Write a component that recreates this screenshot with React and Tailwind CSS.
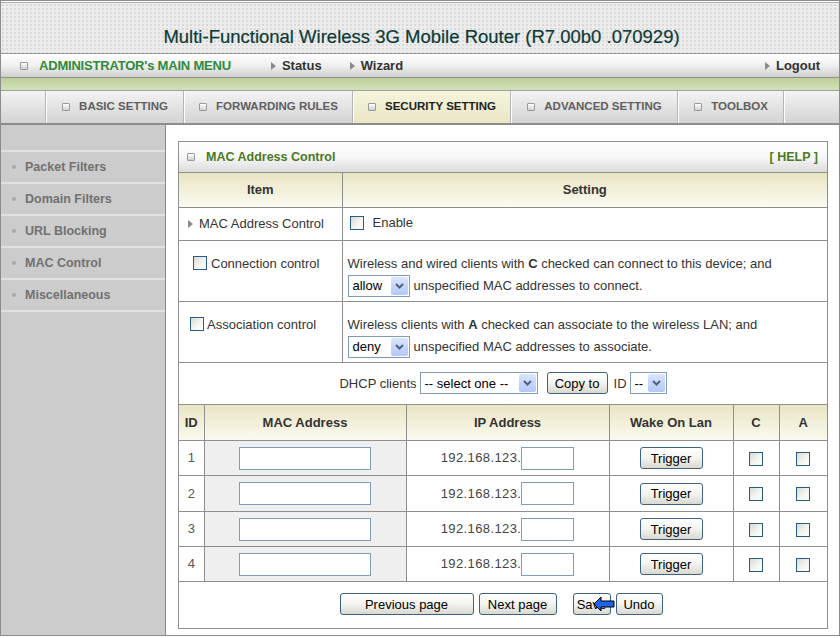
import React from 'react';

const sans = "font-['Liberation_Sans',Arial,sans-serif]";

function Sq() {
    return <span className="inline-block w-[8px] h-[8px] border border-[#9a9a9a] bg-gradient-to-b from-white to-[#cfcfcf] rounded-[1px]" />;
}

function Tri() {
    return (
        <svg width="5" height="8" viewBox="0 0 5 8" className="inline-block mr-[6px]">
            <path d="M0 0L5 4L0 8Z" fill="#8a8a8a" />
        </svg>
    );
}

function Box() {
    return <span className="inline-block w-[14px] h-[14px] border border-[#2a5a86] bg-gradient-to-br from-[#d9d9d2] via-[#f2f2ee] to-white align-middle" />;
}

function Select({ value, w }) {
    return (
        <span className={`inline-flex items-center justify-between h-[22px] border border-[#7f9db9] bg-white align-middle ${w}`}>
            <span className="pl-[4px] text-[13px] text-black leading-none">{value}</span>
            <span className="w-[17px] h-[18px] mr-[1px] rounded-[2px] bg-gradient-to-b from-[#dbe5fd] to-[#b3c8f7] flex items-center justify-center">
                <svg width="9" height="6" viewBox="0 0 9 6">
                    <path d="M1 1L4.5 4.5L8 1" stroke="#4d6185" strokeWidth="2" fill="none" />
                </svg>
            </span>
        </span>
    );
}

function Btn({ children, w }) {
    return (
        <button className={`h-[22px] rounded-[3px] border border-[#3d6282] bg-gradient-to-b from-white via-[#f3f3ef] to-[#d9d9d0] text-[13px] text-black leading-none ${w}`}>
            {children}
        </button>
    );
}

function Input({ w }) {
    return <span className={`inline-block h-[23px] border border-[#7f9db9] bg-white align-middle ${w}`} />;
}

const tabs = [
    { label: 'BASIC SETTING', w: 'w-[138px]' },
    { label: 'FORWARDING RULES', w: 'w-[169px]' },
    { label: 'SECURITY SETTING', w: 'w-[158px]', active: true },
    { label: 'ADVANCED SETTING', w: 'w-[167px]' },
    { label: 'TOOLBOX', w: 'w-[106px]' },
];

const sideItems = ['Packet Filters', 'Domain Filters', 'URL Blocking', 'MAC Control', 'Miscellaneous'];

const rows = [
    { id: 1, h: 'h-[35px]' },
    { id: 2, h: 'h-[36px]' },
    { id: 3, h: 'h-[35px]' },
    { id: 4, h: 'h-[35px]' },
];

export default function App() {
    return (
        <div className={`w-[840px] h-[638px] bg-white ${sans}`}>
            <div className="w-[840px] h-[636px] border border-[#8c8c8c] flex flex-col overflow-hidden">
                {/* Title */}
                <div className="h-[51px] border-t border-[#b0b0b0] mt-[1px] bg-[#ececec] bg-[radial-gradient(#d9d9d9_1px,transparent_1px)] bg-[length:4px_4px] flex items-end justify-center pb-[5px]">
                    <h1 className="text-[18.5px] text-[#0c3a35] leading-[22px] ml-[3px] [-webkit-text-stroke:0.2px_#0c3a35]">Multi-Functional Wireless 3G Mobile Router (R7.00b0 .070929)</h1>
                </div>

                {/* Main menu bar */}
                <div className="h-[25px] border-t border-[#9a9a9a] border-b border-b-[#8e8e8e] bg-gradient-to-b from-white via-[#f0f0f0] to-[#cfcfcf] flex items-center text-[13px] font-bold">
                    <span className="ml-[19px] mr-[11px] flex"><Sq /></span>
                    <span className="text-[#2f8a3c] tracking-[-0.2px]">ADMINISTRATOR's MAIN MENU</span>
                    <span className="ml-[40px] text-[#333] flex items-center"><Tri />Status</span>
                    <span className="ml-[28px] text-[#333] flex items-center"><Tri />Wizard</span>
                    <span className="ml-auto mr-[19px] text-[#333] flex items-center"><Tri />Logout</span>
                </div>

                {/* Green band */}
                <div className="h-[13px] bg-gradient-to-b from-[#bdd09a] to-[#d2e0b7] border-b border-[#a0a0a0]" />

                {/* Tabs */}
                <div className="h-[34px] flex bg-gradient-to-b from-[#f3f3f3] to-[#d3d3d3] border-b-2 border-[#8c8c8c]">
                    <div className="w-[45px] border-r border-[#b5b5b5]" />
                    {tabs.map((t) => (
                        <div
                            key={t.label}
                            className={`${t.w} flex items-center justify-center gap-[9px] border-l border-l-white border-r border-[#b5b5b5] text-[11.5px] font-bold ${t.active ? 'bg-gradient-to-b from-[#f6f4dc] to-[#e9e6c6] text-[#222]' : 'text-[#5f5f5f]'}`}
                        >
                            <Sq />
                            <span>{t.label}</span>
                        </div>
                    ))}
                    <div className="flex-1 border-l border-l-white" />
                </div>

                {/* Body */}
                <div className="flex-1 flex min-h-0">
                    <div className="w-[165px] shrink-0 bg-[#cccccc] border-r border-[#8a8a8a] flex flex-col">
                        <div className="h-[25px]" />
                        {sideItems.map((s) => (
                            <div key={s} className="h-[32px] border-t-2 border-[#e2e2e2] flex items-center pl-[11px] text-[12.5px] font-bold text-[#717171]">
                                <span className="w-[4px] h-[4px] rounded-full bg-[#a8a8a8] mr-[9px]" />
                                {s}
                            </div>
                        ))}
                        <div className="border-t-2 border-[#e2e2e2]" />
                    </div>

                    <div className="flex-1 bg-white pl-[12px] pr-[11px] pt-[16px]">
                        <div className="border border-[#8f8f8f] text-[13px] text-[#333]">
                            {/* Panel header */}
                            <div className="h-[31px] flex items-center pl-[8px] pr-[6px] bg-gradient-to-b from-white via-[#f7f7f7] to-[#dcdcdc] border-b border-[#8f8f8f]">
                                <Sq />
                                <span className="ml-[11px] text-[12.5px] font-bold text-[#4b7a1f]">MAC Address Control</span>
                                <span className="ml-auto mr-[3px] text-[12.5px] font-bold text-[#4b7a1f]">[ HELP ]</span>
                            </div>

                            <table className="w-full border-collapse">
                                <tbody>
                                    <tr className="h-[34px] bg-gradient-to-b from-[#e8e5c2] to-[#fbfaf1]">
                                        <td className="w-[163px] text-center font-bold text-[13px] text-[#333]">Item</td>
                                        <td className="border-l border-[#8f8f8f] text-center font-bold text-[13px] text-[#333]">Setting</td>
                                    </tr>
                                    <tr className="h-[33px]">
                                        <td className="border-t border-[#8f8f8f] pl-[9px] text-[#333]">
                                            <span className="inline-flex items-center"><Tri />MAC Address Control</span>
                                        </td>
                                        <td className="border-t border-l border-[#8f8f8f] pl-[7px]">
                                            <span className="inline-flex items-center gap-[9px] mt-[1px]"><Box />Enable</span>
                                        </td>
                                    </tr>
                                    <tr className="h-[61px]">
                                        <td className="border-t border-[#8f8f8f] align-top pt-[13px] pl-[14px]">
                                            <span className="inline-flex items-center gap-[4px]"><Box />Connection control</span>
                                        </td>
                                        <td className="border-t border-l border-[#8f8f8f] pl-[5px] leading-[22px] align-top pt-[12px]">
                                            <div>Wireless and wired clients with <b>C</b> checked can connect to this device; and</div>
                                            <div className="flex items-center gap-[4px]"><Select value="allow" w="w-[62px]" />unspecified MAC addresses to connect.</div>
                                        </td>
                                    </tr>
                                    <tr className="h-[61px]">
                                        <td className="border-t border-[#8f8f8f] align-top pt-[13px] pl-[11px]">
                                            <span className="inline-flex items-center gap-[3px]"><Box />Association control</span>
                                        </td>
                                        <td className="border-t border-l border-[#8f8f8f] pl-[5px] leading-[22px] align-top pt-[12px]">
                                            <div>Wireless clients with <b>A</b> checked can associate to the wireless LAN; and</div>
                                            <div className="flex items-center gap-[4px]"><Select value="deny" w="w-[62px]" />unspecified MAC addresses to associate.</div>
                                        </td>
                                    </tr>
                                    <tr className="h-[42px]">
                                        <td colSpan={2} className="border-t border-[#8f8f8f]">
                                            <div className="flex items-center justify-center gap-[3px]">
                                                <span>DHCP clients</span>
                                                <Select value="-- select one --" w="w-[118px]" />
                                                <span className="ml-[6px]"><Btn w="w-[61px]">Copy to</Btn></span>
                                                <span className="ml-[3px]">ID</span>
                                                <Select value="--" w="w-[37px]" />
                                            </div>
                                        </td>
                                    </tr>
                                </tbody>
                            </table>

                            <table className="w-full border-collapse border-t border-[#8f8f8f]">
                                <tbody>
                                    <tr className="h-[36px] bg-gradient-to-b from-[#e8e5c2] to-[#fbfaf1] font-bold text-[13px] text-[#333]">
                                        <td className="w-[25px] text-center">ID</td>
                                        <td className="w-[202px] border-l border-[#8f8f8f] text-center">MAC Address</td>
                                        <td className="w-[203px] border-l border-[#8f8f8f] text-center">IP Address</td>
                                        <td className="w-[124px] border-l border-[#8f8f8f] text-center">Wake On Lan</td>
                                        <td className="w-[46px] border-l border-[#8f8f8f] text-center">C</td>
                                        <td className="border-l border-[#8f8f8f] text-center">A</td>
                                    </tr>
                                    {rows.map((r) => (
                                        <tr key={r.id} className={r.h}>
                                            <td className="border-t border-[#8f8f8f] text-center text-[#555]">{r.id}</td>
                                            <td className="border-t border-l border-[#8f8f8f] bg-[#efefef] text-center">
                                                <Input w="w-[132px]" />
                                            </td>
                                            <td className="border-t border-l border-[#8f8f8f] text-center">
                                                <span className="inline-flex items-center">
                                                    <span className="text-[#444] tracking-[0.4px]">192.168.123.</span>
                                                    <Input w="w-[53px]" />
                                                </span>
                                            </td>
                                            <td className="border-t border-l border-[#8f8f8f] text-center">
                                                <Btn w="w-[63px]">Trigger</Btn>
                                            </td>
                                            <td className="border-t border-l border-[#8f8f8f] text-center"><Box /></td>
                                            <td className="border-t border-l border-[#8f8f8f] text-center"><Box /></td>
                                        </tr>
                                    ))}
                                    <tr className="h-[46px]">
                                        <td colSpan={6} className="border-t border-[#8f8f8f]">
                                            <div className="flex items-center justify-center pr-[4px] -mt-[1px]">
                                                <Btn w="w-[134px]">Previous page</Btn>
                                                <span className="ml-[5px]"><Btn w="w-[78px]">Next page</Btn></span>
                                                <span className="ml-[16px] relative">
                                                    <Btn w="w-[38px]">Save</Btn>
                                                    <svg width="22" height="16" viewBox="0 0 22 16" className="absolute left-[20px] top-[3px]">
                                                        <path d="M1 8L8 1V5H21V11H8V15Z" fill="#1f63e6" stroke="#000" strokeWidth="1" strokeLinejoin="round" />
                                                    </svg>
                                                </span>
                                                <span className="ml-[5px]"><Btn w="w-[47px]">Undo</Btn></span>
                                            </div>
                                        </td>
                                    </tr>
                                </tbody>
                            </table>
                        </div>
                    </div>
                </div>
            </div>
        </div>
    );
}
